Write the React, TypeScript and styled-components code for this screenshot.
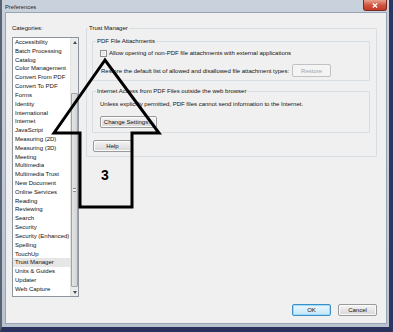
import styled, { createGlobalStyle } from 'styled-components'

const GlobalStyle = createGlobalStyle`
  html, body {
    margin: 0;
    padding: 0;
    background: #ffffff;
  }
  body {
    font-family: 'Liberation Sans', Arial, sans-serif;
  }
  * {
    box-sizing: border-box;
  }
`

const categories = [
  'Accessibility',
  'Batch Processing',
  'Catalog',
  'Color Management',
  'Convert From PDF',
  'Convert To PDF',
  'Forms',
  'Identity',
  'International',
  'Internet',
  'JavaScript',
  'Measuring (2D)',
  'Measuring (3D)',
  'Meeting',
  'Multimedia',
  'Multimedia Trust',
  'New Document',
  'Online Services',
  'Reading',
  'Reviewing',
  'Search',
  'Security',
  'Security (Enhanced)',
  'Spelling',
  'TouchUp',
  'Trust Manager',
  'Units & Guides',
  'Updater',
  'Web Capture',
]

const Window = styled.div`
  position: relative;
  width: 393px;
  height: 332px;
  display: flex;
  flex-direction: column;
  padding: 0 2px 3px 3px;
  background: linear-gradient(#c9d1dc, #bac4d0);
  border-left: 2px solid #5a6372;
  border-right: 4px solid #2f3760;
  border-bottom: 5px solid #2b325b;
  font-family: 'Liberation Sans', Arial, sans-serif;
  font-size: 6px;
  color: #111;
`

const TitleBar = styled.div`
  height: 12px;
  flex: none;
  display: flex;
  align-items: flex-start;
  justify-content: space-between;
`

const Title = styled.span`
  padding-top: 4px;
  font-size: 5.8px;
  line-height: 7px;
  color: #1c2330;
`

const CloseButton = styled.div`
  width: 24px;
  height: 11px;
  display: flex;
  align-items: center;
  justify-content: center;
  border: 1px solid #7a2a22;
  border-top: none;
  border-radius: 0 0 3px 3px;
  background: linear-gradient(#e9a393, #d2553f 50%, #c13a26);

  svg {
    width: 6px;
    height: 5px;
  }
`

const Client = styled.div`
  flex: 1;
  display: flex;
  flex-direction: column;
  padding: 11px 9px 7px 6px;
  background: #f0f0f0;
  border: 1px solid #9aa5b3;
`

const Main = styled.div`
  flex: 1;
  display: flex;
  gap: 7px;
  min-height: 0;
`

const Sidebar = styled.div`
  width: 67px;
  display: flex;
  flex-direction: column;
`

const FieldLabel = styled.div`
  line-height: 8px;
  margin-bottom: 5px;
`

const ListBox = styled.div`
  flex: 1;
  display: flex;
  background: #ffffff;
  border: 1px solid #8f959e;
  overflow: hidden;
`

const ListItems = styled.div`
  flex: 1;
  display: flex;
  flex-direction: column;
`

const ListItem = styled.div<{ $selected?: boolean }>`
  height: 8.82px;
  line-height: 8.82px;
  padding-left: 2px;
  white-space: nowrap;
  background: ${({ $selected }) => ($selected ? '#e6e6e6' : 'transparent')};
`

const ScrollBar = styled.div`
  width: 8px;
  display: flex;
  flex-direction: column;
  background: #ececec;
  border-left: 1px solid #e2e2e2;
`

const ScrollArrow = styled.div`
  height: 8px;
  flex: none;
  display: flex;
  align-items: center;
  justify-content: center;

  svg {
    width: 4px;
    height: 3px;
  }
`

const ScrollTrack = styled.div`
  flex: 1;
  display: flex;
  flex-direction: column;
  padding: 47px 0 1px;
`

const Thumb = styled.div`
  flex: 1;
  display: flex;
  align-items: center;
  justify-content: center;
  border: 1px solid #a3a3a3;
  border-radius: 1px;
  background: linear-gradient(90deg, #e4e4e4, #d4d4d4);
`

const Grip = styled.div`
  width: 3px;
  height: 4px;
  border-top: 1px solid #8a8a8a;
  border-bottom: 1px solid #8a8a8a;
  background: linear-gradient(#f4f4f4 40%, #8a8a8a 40%, #8a8a8a 60%, #f4f4f4 60%);
`

const Panel = styled.div`
  flex: 1;
  display: flex;
  flex-direction: column;
  align-items: stretch;
`

const Group = styled.fieldset<{ $gap?: number; $stretch?: boolean }>`
  margin: ${({ $gap }) => $gap ?? 0}px 0 0;
  padding: 0;
  min-inline-size: 0;
  align-self: ${({ $stretch }) => ($stretch ? 'stretch' : 'auto')};
  border: 1px solid #d6dee3;
  border-radius: 1px;
`

const Legend = styled.legend<{ $indent: number }>`
  margin-left: ${({ $indent }) => $indent}px;
  padding: 0 1px;
  line-height: 8px;
`

const GroupBody = styled.div<{ $pad: string }>`
  display: flex;
  flex-direction: column;
  align-items: flex-start;
  padding: ${({ $pad }) => $pad};
`

const Row = styled.div<{ $gap: number; $top?: number }>`
  display: flex;
  align-items: center;
  gap: ${({ $gap }) => $gap}px;
  margin-top: ${({ $top }) => $top ?? 0}px;
  white-space: nowrap;
`

const Text = styled.span<{ $offset?: number }>`
  line-height: 8px;
  margin-left: ${({ $offset }) => $offset ?? 0}px;
`

const CheckBox = styled.span`
  width: 7px;
  height: 7px;
  border: 1px solid #8e8f8f;
  background: linear-gradient(135deg, #dcdcdc, #f8f8f8);
  box-shadow: inset 0 0 0 1px #f4f4f4;
`

const Button = styled.button<{ $width: number; $height?: number; $default?: boolean; $top?: number; $left?: number }>`
  width: ${({ $width }) => $width}px;
  height: ${({ $height }) => $height ?? 12}px;
  margin: ${({ $top }) => $top ?? 0}px 0 0 ${({ $left }) => $left ?? 0}px;
  padding: 0;
  display: flex;
  align-items: center;
  justify-content: center;
  font-family: inherit;
  font-size: 6px;
  color: #111;
  border-radius: 2px;
  border: 1px solid ${({ $default }) => ($default ? '#3d8ec4' : '#9a9a9a')};
  background: ${({ $default }) =>
    $default
      ? 'linear-gradient(#eaf6fd, #d9f0fc 50%, #bee6fd)'
      : 'linear-gradient(#f5f5f5, #e6e6e6 50%, #d6d6d6)'};
  box-shadow: inset 0 0 0 1px ${({ $default }) => ($default ? '#9fdaf7' : '#fbfbfb')};
  white-space: nowrap;

  &:disabled {
    color: #a3a3a3;
    border-color: #c2c2c2;
    background: #f4f4f4;
    box-shadow: none;
  }
`

const Footer = styled.div`
  flex: none;
  display: flex;
  justify-content: flex-end;
  gap: 7px;
  margin-top: 7px;
`

const Overlay = styled.svg`
  position: absolute;
  left: 0;
  top: 0;
  pointer-events: none;
`

const StepNumber = styled.span`
  position: absolute;
  left: 99px;
  top: 168px;
  font-family: 'Liberation Sans', Arial, sans-serif;
  font-size: 14px;
  font-weight: 700;
  line-height: 14px;
  color: #000;
`

export default function App() {
  return (
    <>
      <GlobalStyle />
      <Window>
        <TitleBar>
          <Title>Preferences</Title>
          <CloseButton>
            <svg viewBox="0 0 6 5">
              <path d="M0.8 0.5 L5.2 4.5 M5.2 0.5 L0.8 4.5" stroke="#ffffff" strokeWidth={1.3} />
            </svg>
          </CloseButton>
        </TitleBar>

        <Client>
          <Main>
            <Sidebar>
              <FieldLabel>Categories:</FieldLabel>
              <ListBox>
                <ListItems>
                  {categories.map((name) => (
                    <ListItem key={name} $selected={name === 'Trust Manager'}>
                      {name}
                    </ListItem>
                  ))}
                </ListItems>
                <ScrollBar>
                  <ScrollArrow>
                    <svg viewBox="0 0 4 3">
                      <path d="M0 3 L2 0 L4 3 Z" fill="#4d4d4d" />
                    </svg>
                  </ScrollArrow>
                  <ScrollTrack>
                    <Thumb>
                      <Grip />
                    </Thumb>
                  </ScrollTrack>
                  <ScrollArrow>
                    <svg viewBox="0 0 4 3">
                      <path d="M0 0 L2 3 L4 0 Z" fill="#4d4d4d" />
                    </svg>
                  </ScrollArrow>
                </ScrollBar>
              </ListBox>
            </Sidebar>

            <Panel>
              <Group>
                <Legend $indent={1}>Trust Manager</Legend>
                <GroupBody $pad="5px 6px 4px 5px">
                  <Group $stretch>
                    <Legend $indent={3}>PDF File Attachments</Legend>
                    <GroupBody $pad="4px 6px 3px 7px">
                      <Row $gap={2}>
                        <CheckBox />
                        <Text>Allow opening of non-PDF file attachments with external applications</Text>
                      </Row>
                      <Row $gap={3} $top={7}>
                        <Text $offset={1}>
                          Restore the default list of allowed and disallowed file attachment types:
                        </Text>
                        <Button $width={39} $height={13} disabled>
                          Restore
                        </Button>
                      </Row>
                    </GroupBody>
                  </Group>

                  <Group $gap={6} $stretch>
                    <Legend $indent={3}>Internet Access from PDF Files outside the web browser</Legend>
                    <GroupBody $pad="5px 6px 4px 7px">
                      <Text>Unless explicitly permitted, PDF files cannot send information to the Internet.</Text>
                      <Button $width={57} $top={8}>
                        Change Settings...
                      </Button>
                    </GroupBody>
                  </Group>

                  <Button $width={39} $top={7} $left={1}>
                    Help
                  </Button>
                </GroupBody>
              </Group>
            </Panel>
          </Main>

          <Footer>
            <Button $width={39} $default>
              OK
            </Button>
            <Button $width={39}>Cancel</Button>
          </Footer>
        </Client>

        <Overlay width={393} height={332} viewBox="0 0 393 332">
          <path
            d="M103 60 L52 133 L78 133 L78 207 L130 207 L130 133 L157 133 Z"
            fill="none"
            stroke="#000000"
            strokeWidth={3}
            strokeLinejoin="miter"
          />
        </Overlay>
        <StepNumber>3</StepNumber>
      </Window>
    </>
  )
}
